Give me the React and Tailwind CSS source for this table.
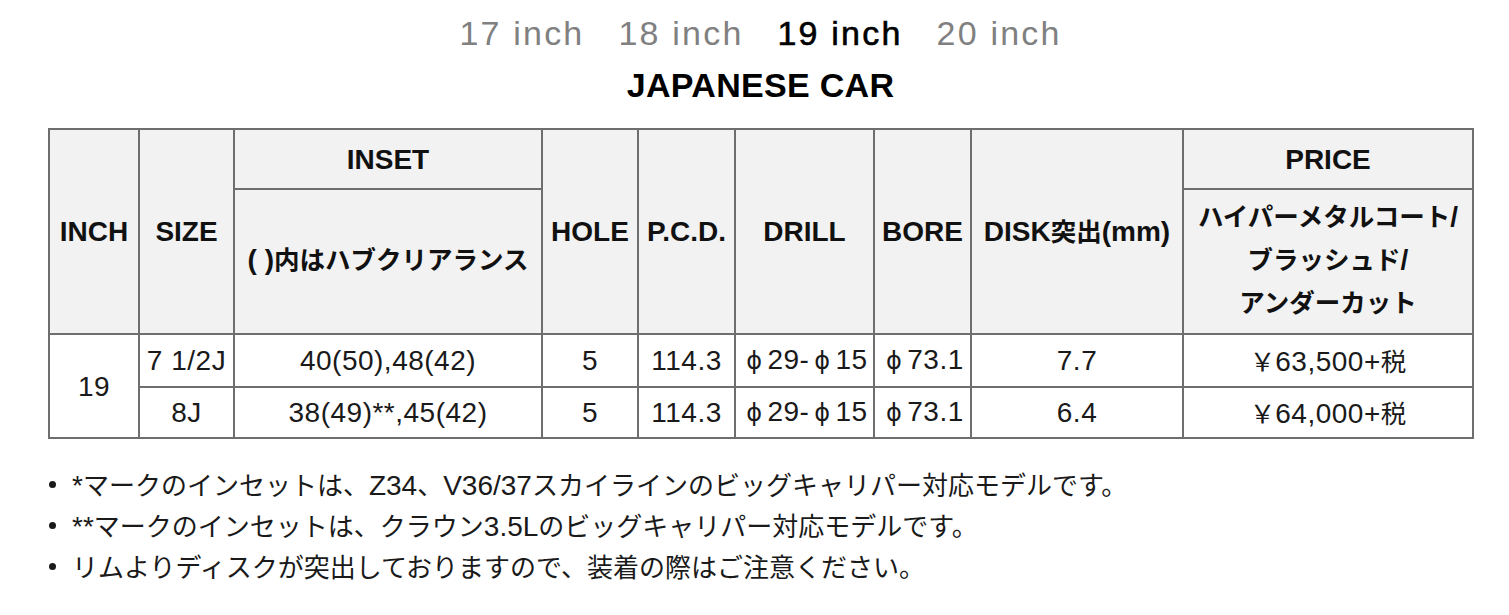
import React from "react";

const JP = /([\u3000-\u30ff\u4e00-\u9fff\uff01-\uffef\u03c6]+)/;

function T({ s, size = "text-[25.5px]" }) {
  return (
    <>
      {s.split(JP).map((p, i) => {
        if (p === "") return null;
        if (!JP.test(p)) return <span key={i}>{p}</span>;
        return p.split(/(φ)/).map((q, j) =>
          q === "" ? null : q === "φ" ? (
            <span
              key={i + "-" + j}
              className="inline-block w-[26px] text-center font-['DejaVu_Sans',sans-serif] text-[24px] font-normal"
            >
              ϕ
            </span>
          ) : (
            <span key={i + "-" + j} className={`font-['Noto_Sans_CJK_JP',sans-serif] ${size} tracking-normal`}>
              {q}
            </span>
          )
        );
      })}
    </>
  );
}

const th = "border-2 border-[#6e6e6e] bg-[#f2f2f2] p-0 text-center align-middle font-bold text-[#111]";
const td = "border-2 border-[#6e6e6e] p-0 text-center align-middle font-normal text-[#1a1a1a] tracking-[0.5px]";

function Row({ size, inset, disk, price, first }) {
  return (
    <tr className={first ? "h-[53px]" : "h-[51px]"}>
      {first && (
        <td rowSpan={2} className={td}>
          19
        </td>
      )}
      <td className={td}>{size}</td>
      <td className={td}>
        <T s={inset} />
      </td>
      <td className={td}>5</td>
      <td className={td}>114.3</td>
      <td className={td}>
        <T s="φ29-φ15" />
      </td>
      <td className={td}>
        <T s="φ73.1" />
      </td>
      <td className={td}>{disk}</td>
      <td className={td}>
        <T s={price} />
      </td>
    </tr>
  );
}

export default function App() {
  return (
    <div className="min-h-[615px] bg-white pl-[48px] pr-[36px] font-['Liberation_Sans',Arial,sans-serif] text-[#1a1a1a]">
      <div className="flex justify-center gap-[34px] pt-[16px] text-[34px] leading-[34px] tracking-[2.2px] text-[#808080]">
        <span>17 inch</span>
        <span>18 inch</span>
        <span className="text-black [-webkit-text-stroke:0.6px_black]">19 inch</span>
        <span>20 inch</span>
      </div>
      <div className="mt-[19px] text-center text-[34px] font-bold leading-[33px] tracking-[0.3px] text-black">
        JAPANESE CAR
      </div>

      <table className="mt-[26px] w-[1424px] table-fixed border-collapse text-[28px] leading-[43px]">
        <colgroup>
          <col className="w-[90px]" />
          <col className="w-[95px]" />
          <col className="w-[308px]" />
          <col className="w-[96px]" />
          <col className="w-[97px]" />
          <col className="w-[139px]" />
          <col className="w-[97px]" />
          <col className="w-[212px]" />
          <col className="w-[290px]" />
        </colgroup>
        <thead>
          <tr className="h-[60px]">
            <th rowSpan={2} className={th}>INCH</th>
            <th rowSpan={2} className={th}>SIZE</th>
            <th className={th}>INSET</th>
            <th rowSpan={2} className={th}>HOLE</th>
            <th rowSpan={2} className={th}>P.C.D.</th>
            <th rowSpan={2} className={th}>DRILL</th>
            <th rowSpan={2} className={th}>BORE</th>
            <th rowSpan={2} className={th}>
              <div className="pb-[3px]">
                <T s="DISK突出(mm)" />
              </div>
            </th>
            <th className={th}>PRICE</th>
          </tr>
          <tr className="h-[145px]">
            <th className={th}>
              <div className="pb-[6px]">
                <T s="( )内はハブクリアランス" />
              </div>
            </th>
            <th className={th}>
              <div className="flex flex-col items-center pb-[8px] leading-[43px]">
                <div className="h-[43px]">
                  <T s="ハイパーメタルコート/" />
                </div>
                <div className="h-[43px]">
                  <T s="ブラッシュド/" />
                </div>
                <div className="h-[43px]">
                  <T s="アンダーカット" />
                </div>
              </div>
            </th>
          </tr>
        </thead>
        <tbody>
          <Row first size="7 1/2J" inset="40(50),48(42)" disk="7.7" price="￥63,500+税" />
          <Row size="8J" inset="38(49)**,45(42)" disk="6.4" price="￥64,000+税" />
        </tbody>
      </table>

      <ul className="mt-[25px] text-[28px] leading-[41px] text-[#1a1a1a]">
        {[
          "*マークのインセットは、Z34、V36/37スカイラインのビッグキャリパー対応モデルです。",
          "**マークのインセットは、クラウン3.5Lのビッグキャリパー対応モデルです。",
          "リムよりディスクが突出しておりますので、装着の際はご注意ください。",
        ].map((s, i) => (
          <li key={i} className="flex h-[41px] items-center">
            <span className="ml-[1px] mr-[16px] h-[7px] w-[7px] shrink-0 rounded-full bg-[#1a1a1a]" />
            <span className="leading-[41px]">
              <T s={s} size="text-[26px]" />
            </span>
          </li>
        ))}
      </ul>
    </div>
  );
}
